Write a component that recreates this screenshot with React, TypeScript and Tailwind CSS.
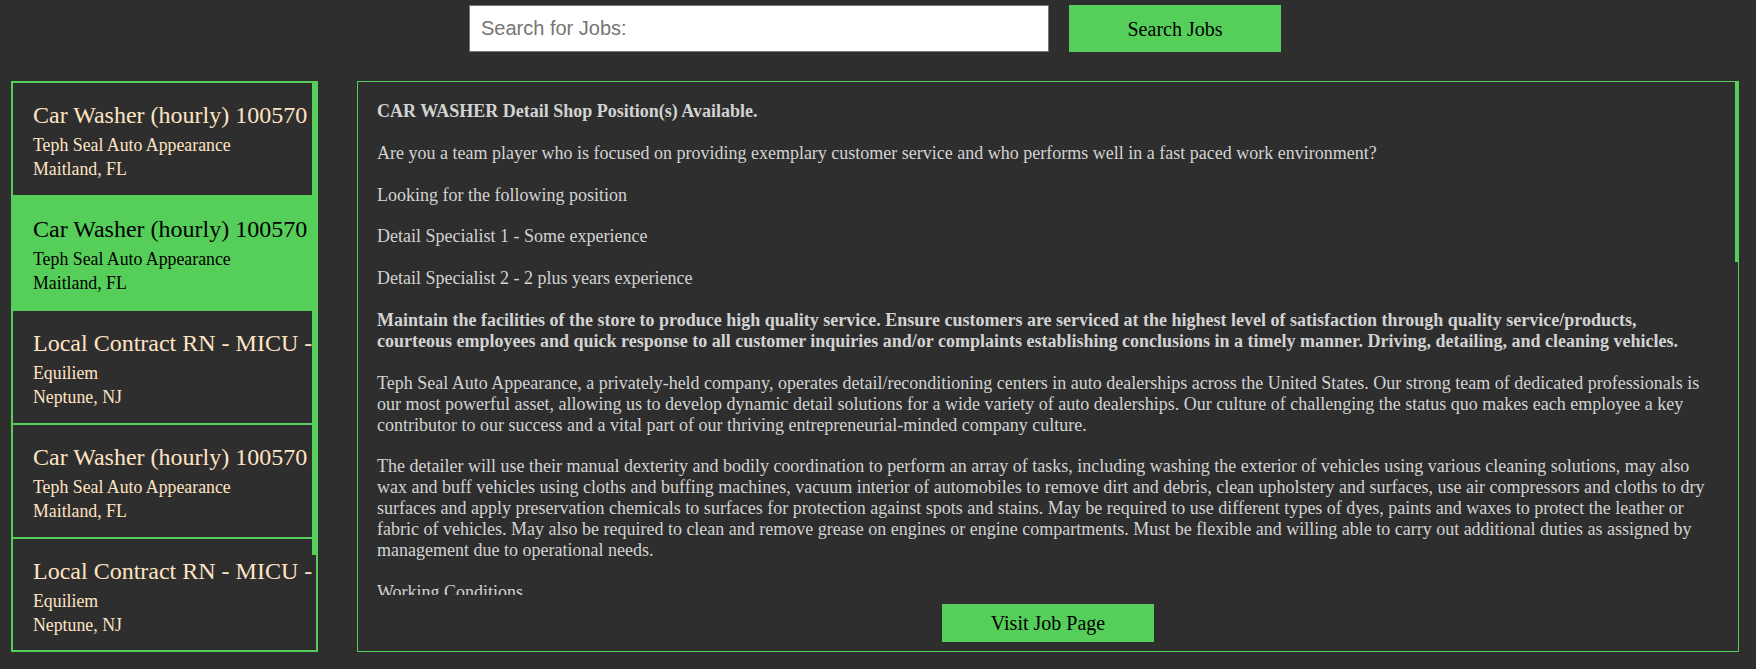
import React from "react";

const jobs = [
  { title: "Car Washer (hourly) 100570", company: "Teph Seal Auto Appearance", loc: "Maitland, FL" },
  { title: "Car Washer (hourly) 100570", company: "Teph Seal Auto Appearance", loc: "Maitland, FL", active: true },
  { title: "Local Contract RN - MICU - Neptune, NJ", company: "Equiliem", loc: "Neptune, NJ" },
  { title: "Car Washer (hourly) 100570", company: "Teph Seal Auto Appearance", loc: "Maitland, FL" },
  { title: "Local Contract RN - MICU - Neptune, NJ", company: "Equiliem", loc: "Neptune, NJ" },
  { title: "Car Washer (hourly) 100571", company: "Teph Seal Auto Appearance", loc: "Orlando, FL" },
];

const paras: { lines: string[]; b?: boolean }[] = [
  { lines: ["CAR WASHER Detail Shop Position(s) Available."], b: true },
  {
    lines: [
      "Are you a team player who is focused on providing exemplary customer service and who performs well in a fast paced work environment?",
    ],
  },
  { lines: ["Looking for the following position"] },
  { lines: ["Detail Specialist 1 - Some experience"] },
  { lines: ["Detail Specialist 2 - 2 plus years experience"] },
  {
    lines: [
      "Maintain the facilities of the store to produce high quality service. Ensure customers are serviced at the highest level of satisfaction through quality service/products,",
      "courteous employees and quick response to all customer inquiries and/or complaints establishing conclusions in a timely manner. Driving, detailing, and cleaning vehicles.",
    ],
    b: true,
  },
  {
    lines: [
      "Teph Seal Auto Appearance, a privately-held company, operates detail/reconditioning centers in auto dealerships across the United States. Our strong team of dedicated professionals is",
      "our most powerful asset, allowing us to develop dynamic detail solutions for a wide variety of auto dealerships. Our culture of challenging the status quo makes each employee a key",
      "contributor to our success and a vital part of our thriving entrepreneurial-minded company culture.",
    ],
  },
  {
    lines: [
      "The detailer will use their manual dexterity and bodily coordination to perform an array of tasks, including washing the exterior of vehicles using various cleaning solutions, may also",
      "wax and buff vehicles using cloths and buffing machines, vacuum interior of automobiles to remove dirt and debris, clean upholstery and surfaces, use air compressors and cloths to dry",
      "surfaces and apply preservation chemicals to surfaces for protection against spots and stains. May be required to use different types of dyes, paints and waxes to protect the leather or",
      "fabric of vehicles. May also be required to clean and remove grease on engines or engine compartments. Must be flexible and willing able to carry out additional duties as assigned by",
      "management due to operational needs.",
    ],
  },
  { lines: ["Working Conditions"] },
  {
    lines: [
      "Work is performed both indoors and outdoors at the dealership, with exposure to varying weather conditions, water, cleaning chemicals and noise from equipment.",
    ],
  },
  { lines: ["Requirements"] },
  { lines: ["Valid driver's license and acceptable driving record"] },
  { lines: ["Must be at least 18 years of age"] },
];

export default function App() {
  return (
    <div className="min-h-[669px] w-full bg-[#2e2e2e] [font-family:'Liberation_Serif','Times_New_Roman',serif]">
      <div className="flex justify-center gap-[20px] pt-[5px] pr-[6px]">
        <input
          type="text"
          placeholder="Search for Jobs:"
          className="h-[47px] w-[580px] border border-[#767676] bg-white px-[11px] [font-family:'Liberation_Sans',Arial,sans-serif] text-[20px] text-black outline-none placeholder:text-[#757575]"
        />
        <button className="h-[47px] w-[212px] bg-[#56ce5a] text-[20px] text-black">
          <span className="[font-family:'Liberation_Serif','Times_New_Roman',serif]">Search Jobs</span>
        </button>
      </div>

      <div className="mt-[29px] flex h-[571px] gap-[39px] pl-[11px] pr-[17px]">
        {/* Job list */}
        <div className="flex w-[307px] border-2 border-[#56ce5a]">
          <div className="min-w-0 flex-1 overflow-hidden">
            {jobs.map((j, i) => (
              <div
                key={i}
                className={
                  j.active
                    ? "h-[114px] overflow-hidden border-b-2 border-[#56ce5a] bg-[#56ce5a] pl-[20px] pt-[18px] text-black"
                    : "h-[114px] overflow-hidden border-b-2 border-[#56ce5a] pl-[20px] pt-[18px] text-[#ffe4c4]"
                }
              >
                <div className="whitespace-nowrap text-[24px] leading-[28px]">{j.title}</div>
                <div className="mt-[4px] whitespace-nowrap text-[17.8px] leading-[24px]">{j.company}</div>
                <div className="whitespace-nowrap text-[17.8px] leading-[24px]">{j.loc}</div>
              </div>
            ))}
          </div>
          <div className="w-[4px] shrink-0">
            <div className="h-[472px] w-full bg-[#56ce5a]" />
          </div>
        </div>

        {/* Job detail */}
        <div className="flex min-w-0 flex-1 flex-col border border-[#56ce5a]">
          <div className="flex min-h-0 flex-1">
            <div className="min-w-0 flex-1 overflow-hidden pl-[19px] pr-[6px] pt-[19px] text-[18px] leading-[20.9px] text-[#d3d3d3]">
              {paras.map((p, i) => (
                <p key={i} className={p.b ? "mb-[20.9px] font-bold" : "mb-[20.9px]"}>
                  {p.lines.map((l, k) => (
                    <span key={k} className="block whitespace-nowrap">
                      {l}
                    </span>
                  ))}
                </p>
              ))}
            </div>
            <div className="w-[3px] shrink-0">
              <div className="h-[180px] w-full bg-[#56ce5a]" />
            </div>
          </div>
          <div className="flex justify-center py-[9px]">
            <button className="h-[38px] w-[212px] bg-[#56ce5a] text-[20px] text-black">
              <span className="[font-family:'Liberation_Serif','Times_New_Roman',serif]">Visit Job Page</span>
            </button>
          </div>
        </div>
      </div>
    </div>
  );
}
